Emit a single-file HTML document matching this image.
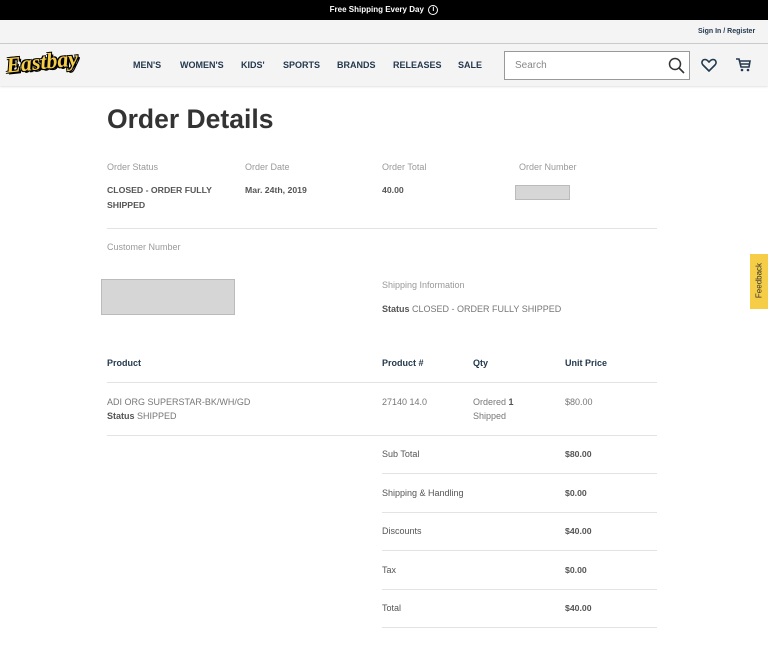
<!DOCTYPE html>
<html><head><meta charset="utf-8"><style>
*{margin:0;padding:0;box-sizing:border-box}
body{width:768px;height:647px;overflow:hidden;background:#fff;font-family:"Liberation Sans",Arial,sans-serif;position:relative;color:#555}
.a{position:absolute;white-space:nowrap}
.top{position:absolute;left:0;top:0;width:768px;height:20px;background:#000;color:#fff;font-size:8px;font-weight:bold;text-align:center;line-height:20px}
.util{position:absolute;left:0;top:20px;width:768px;height:24px;background:#f4f4f4;border-bottom:1px solid #ccc}
.nav{position:absolute;left:0;top:44px;width:768px;height:42px;background:#f4f4f4;box-shadow:0 1px 2px rgba(0,0,0,.12)}
.nv{position:absolute;top:60px;font-size:9px;font-weight:bold;color:#24394e}
.lbl{font-size:9px;color:#999}
.val{font-size:8.7px;color:#555;font-weight:bold;line-height:15px}
.th{font-size:9px;font-weight:bold;color:#24394e}
.td{font-size:9px;color:#777;line-height:14px}
.hr{position:absolute;height:1px;background:#e3e3e3}
.box{position:absolute;background:#d6d6d6;border:1px solid #bbb}
</style></head><body>
<div class="top">Free Shipping Every Day &nbsp;<span style="display:inline-block;width:10px;height:10px;border:1px solid #fff;border-radius:50%;font-size:7px;line-height:8px;vertical-align:middle">i</span></div>
<div class="util"></div>
<div class="a" style="left:698px;top:28px;font-size:7px;font-weight:bold;color:#24394e">Sign In / Register</div>
<div class="nav"></div>
<div class="a" style="left:6px;top:49px;font-size:22px;font-weight:bold;font-style:italic;color:#f5cd47;font-family:'Liberation Serif',serif;text-shadow:1px 1px 0 #000,-1px -1px 0 #000,1px -1px 0 #000,-1px 1px 0 #000,2px 2px 0 #000;transform:rotate(-6deg)">Eastbay</div>
<div class="nv" style="left:133px">MEN'S</div>
<div class="nv" style="left:180px">WOMEN'S</div>
<div class="nv" style="left:241px">KIDS'</div>
<div class="nv" style="left:283px">SPORTS</div>
<div class="nv" style="left:337px">BRANDS</div>
<div class="nv" style="left:393px">RELEASES</div>
<div class="nv" style="left:458px">SALE</div>
<div class="a" style="left:504px;top:51px;width:186px;height:29px;background:#fff;border:1px solid #999"></div>
<div class="a" style="left:515px;top:60px;font-size:10px;color:#888">Search</div>
<svg class="a" style="left:668px;top:57px" width="17" height="17" viewBox="0 0 17 17"><circle cx="7" cy="7" r="5.5" fill="none" stroke="#333" stroke-width="1.5"/><path d="M11 11L16 16" stroke="#333" stroke-width="1.6"/></svg>
<svg class="a" style="left:701px;top:58px" width="16" height="14" viewBox="0 0 16 14"><path d="M8 13L2 7C0 5 1 1.5 4 1.5 6 1.5 7 3 8 4 9 3 10 1.5 12 1.5 15 1.5 16 5 14 7Z" fill="none" stroke="#24394e" stroke-width="1.6"/></svg>
<svg class="a" style="left:735px;top:57px" width="17" height="16" viewBox="0 0 17 16"><path d="M1 2H4L6 10H14L15 4H5M6 7H14" fill="none" stroke="#24394e" stroke-width="1.6"/><circle cx="7" cy="13" r="1.3" fill="#24394e"/><circle cx="13" cy="13" r="1.3" fill="#24394e"/></svg>

<div class="a" style="left:107px;top:104px;font-size:26.5px;font-weight:bold;color:#333">Order Details</div>
<div class="a lbl" style="left:107px;top:162px">Order Status</div>
<div class="a lbl" style="left:245px;top:162px">Order Date</div>
<div class="a lbl" style="left:382px;top:162px">Order Total</div>
<div class="a lbl" style="left:519px;top:162px">Order Number</div>
<div class="a val" style="left:107px;top:183px">CLOSED - ORDER FULLY<br>SHIPPED</div>
<div class="a val" style="left:245px;top:183px">Mar. 24th, 2019</div>
<div class="a val" style="left:382px;top:183px">40.00</div>
<div class="box" style="left:515px;top:185px;width:55px;height:15px"></div>
<div class="hr" style="left:107px;top:228px;width:550px"></div>
<div class="a lbl" style="left:107px;top:242px">Customer Number</div>
<div class="box" style="left:101px;top:279px;width:134px;height:36px"></div>
<div class="a lbl" style="left:382px;top:280px">Shipping Information</div>
<div class="a td" style="left:382px;top:302px"><b style="color:#555">Status</b> CLOSED - ORDER FULLY SHIPPED</div>

<div class="a th" style="left:107px;top:358px">Product</div>
<div class="a th" style="left:382px;top:358px">Product #</div>
<div class="a th" style="left:473px;top:358px">Qty</div>
<div class="a th" style="left:565px;top:358px">Unit Price</div>
<div class="hr" style="left:107px;top:382px;width:550px"></div>
<div class="a td" style="left:107px;top:395px">ADI ORG SUPERSTAR-BK/WH/GD<br><b style="color:#555">Status</b> SHIPPED</div>
<div class="a td" style="left:382px;top:395px">27140 14.0</div>
<div class="a td" style="left:473px;top:395px">Ordered <b style="color:#555">1</b><br>Shipped</div>
<div class="a td" style="left:565px;top:395px">$80.00</div>
<div class="hr" style="left:107px;top:435px;width:550px"></div>

<div class="a td" style="left:382px;top:447px;color:#555">Sub Total</div><div class="a val" style="left:565px;top:446.5px">$80.00</div>
<div class="hr" style="left:382px;top:473px;width:275px"></div>
<div class="a td" style="left:382px;top:486px;color:#555">Shipping &amp; Handling</div><div class="a val" style="left:565px;top:485.5px">$0.00</div>
<div class="hr" style="left:382px;top:512px;width:275px"></div>
<div class="a td" style="left:382px;top:524px;color:#555">Discounts</div><div class="a val" style="left:565px;top:523.5px">$40.00</div>
<div class="hr" style="left:382px;top:550px;width:275px"></div>
<div class="a td" style="left:382px;top:563px;color:#555">Tax</div><div class="a val" style="left:565px;top:562.5px">$0.00</div>
<div class="hr" style="left:382px;top:589px;width:275px"></div>
<div class="a td" style="left:382px;top:601px;color:#555">Total</div><div class="a val" style="left:565px;top:600.5px">$40.00</div>
<div class="hr" style="left:382px;top:627px;width:275px"></div>

<div class="a" style="left:750px;top:254px;width:18px;height:55px;background:#f5cd47"></div>
<div class="a" style="left:738px;top:276px;width:42px;font-size:8px;color:#333;transform:rotate(-90deg);text-align:center">Feedback</div>
</body></html>
